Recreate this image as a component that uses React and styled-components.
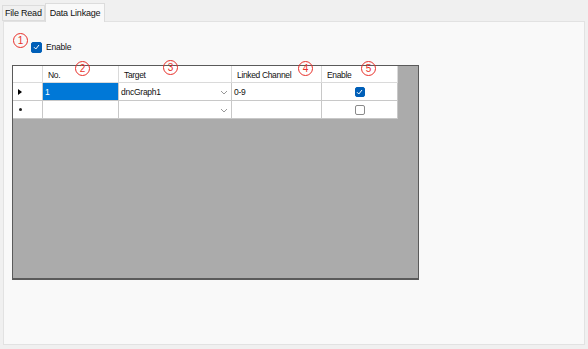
import React from 'react';
import styled, { createGlobalStyle } from 'styled-components';

const Global = createGlobalStyle`
	html, body {
		margin: 0;
		padding: 0;
		background: #f0f0f0;
	}
	body {
		font-family: 'Liberation Sans', Arial, sans-serif;
		font-size: 9px;
		color: #111;
	}
`;

const Window = styled.div`
	position: relative;
	width: 588px;
	height: 349px;
	padding: 2px 3px 4px 2px;
	box-sizing: border-box;
	display: flex;
	flex-direction: column;
`;

const TabStrip = styled.div`
	display: flex;
	align-items: flex-end;
	height: 19px;
`;

const Tab = styled.div`
	height: ${p => (p.active ? '19px' : '16px')};
	padding: 0 ${p => (p.active ? '4px' : '2px')};
	margin-bottom: ${p => (p.active ? '-1px' : '0')};
	display: flex;
	align-items: center;
	box-sizing: border-box;
	background: ${p => (p.active ? '#f9f9f9' : '#f0f0f0')};
	border: 1px solid #dcdcdc;
	border-bottom: ${p => (p.active ? 'none' : '1px solid #dcdcdc')};
	position: relative;
	z-index: ${p => (p.active ? 2 : 1)};
	font-size: 9px;
	letter-spacing: -0.2px;
`;

const Panel = styled.div`
	flex: 1;
	margin-left: 1px;
	background: #f9f9f9;
	border: 1px solid #e2e2e2;
	padding: 19px 8px 0 8px;
	display: flex;
	flex-direction: column;
	gap: 12px;
`;

const CheckRow = styled.label`
	display: flex;
	align-items: center;
	gap: 4px;
	height: 12px;
	padding-left: 19px;
	font-size: 8.5px;
	letter-spacing: -0.2px;
`;

const Box = styled.span`
	width: ${p => p.size || 11}px;
	height: ${p => p.size || 11}px;
	box-sizing: border-box;
	border-radius: 2px;
	display: inline-flex;
	align-items: center;
	justify-content: center;
	background: ${p => (p.checked ? '#005fb8' : '#fff')};
	border: 1px solid ${p => (p.checked ? '#005fb8' : '#8a8a8a')};
`;

const Check = ({ checked, size }) => (
	<Box checked={checked} size={size}>
		{checked && (
			<svg width="7" height="6" viewBox="0 0 7 6">
				<path d="M1 3.2 L2.8 5 L6 1" fill="none" stroke="#fff" strokeWidth="1" />
			</svg>
		)}
	</Box>
);

const Grid = styled.div`
	width: 407px;
	height: 215px;
	box-sizing: border-box;
	background: #ababab;
	border: 1px solid #5a5a5a;
	border-bottom-width: 2px;
	display: grid;
	grid-template-columns: 30px 76px 113px 90px 76px;
	grid-template-rows: 17px 18px 18px;
	align-content: start;
`;

const HeadCell = styled.div`
	background: #fff;
	border-right: 1px solid #dadada;
	border-bottom: 1px solid #dadada;
	display: flex;
	align-items: flex-end;
	padding: 0 0 2px 5px;
	font-size: 8.5px;
	letter-spacing: -0.35px;
`;

const RowHead = styled.div`
	background: #fff;
	border-right: 1px solid #c8c8c8;
	border-bottom: 1px solid #c8c8c8;
	display: flex;
	align-items: center;
	padding-left: 5px;
`;

const Cell = styled.div`
	background: ${p => (p.selected ? '#0078d7' : '#fff')};
	color: ${p => (p.selected ? '#fff' : '#111')};
	border-right: 1px solid #c8c8c8;
	border-bottom: 1px solid #c8c8c8;
	display: flex;
	align-items: center;
	justify-content: ${p => (p.center ? 'center' : 'space-between')};
	padding: 1px ${p => (p.center ? '0' : '3px')} 0 ${p => (p.center ? '0' : '2px')};
	font-size: 8.5px;
	letter-spacing: -0.25px;
`;

const Chevron = () => (
	<svg width="8" height="5" viewBox="0 0 8 5">
		<path d="M1 1 L4 4 L7 1" fill="none" stroke="#8c8c8c" strokeWidth="0.9" />
	</svg>
);

const Arrow = () => (
	<svg width="4" height="6" viewBox="0 0 4 6">
		<path d="M0 0 L4 3 L0 6 Z" fill="#000" />
	</svg>
);

const Dot = styled.span`
	width: 3px;
	height: 3px;
	border-radius: 50%;
	background: #222;
	margin-left: 1px;
`;

const Marker = styled.span`
	position: absolute;
	left: ${p => p.x}px;
	top: ${p => p.y}px;
	width: 13px;
	height: 13px;
	border: 1px solid #e8302a;
	border-radius: 50%;
	color: #e8302a;
	font-family: 'Liberation Sans', Arial, sans-serif;
	font-size: 10px;
	line-height: 13px;
	text-align: center;
`;

const markers = [
	{ n: 1, x: 13, y: 33 },
	{ n: 2, x: 75, y: 61 },
	{ n: 3, x: 163, y: 60 },
	{ n: 4, x: 298, y: 61 },
	{ n: 5, x: 361, y: 61 },
];

const rows = [
	{ no: '1', target: 'dncGraph1', channel: '0-9', enable: true, current: true },
	{ no: '', target: '', channel: '', enable: false, current: false },
];

const App = () =>
	<Window>
		<Global />
		<TabStrip>
			<Tab>File Read</Tab>
			<Tab active>Data Linkage</Tab>
		</TabStrip>
		<Panel>
			<CheckRow>
				<Check checked />
				Enable
			</CheckRow>
			<Grid>
				<HeadCell />
				<HeadCell>No.</HeadCell>
				<HeadCell>Target</HeadCell>
				<HeadCell>Linked Channel</HeadCell>
				<HeadCell>Enable</HeadCell>
				{rows.map((row, index) =>
					<React.Fragment key={index}>
						<RowHead>{row.current ? <Arrow /> : <Dot />}</RowHead>
						<Cell selected={row.current}>{row.no}</Cell>
						<Cell>
							<span>{row.target}</span>
							<Chevron />
						</Cell>
						<Cell>{row.channel}</Cell>
						<Cell center>
							<Check checked={row.enable} size={10} />
						</Cell>
					</React.Fragment>,
				)}
			</Grid>
		</Panel>
		{markers.map(m =>
			<Marker key={m.n} x={m.x} y={m.y}>{m.n}</Marker>,
		)}
	</Window>;

export default App;
